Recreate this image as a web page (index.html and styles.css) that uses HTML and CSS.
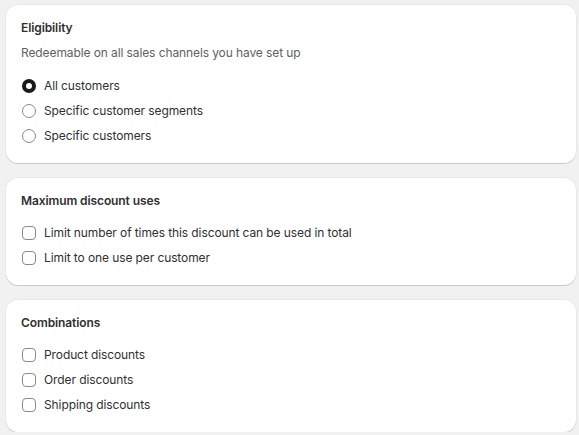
FILE: index.html
```html
<!DOCTYPE html>
<html lang="en">
<head>
  <meta charset="UTF-8" />
  <title>Discount settings</title>
  <link rel="stylesheet" href="styles.css">
</head>
<body>

  <div class="card">
    <h2 class="card-title">Eligibility</h2>
    <p class="card-note">Redeemable on all sales channels you have set up</p>
    <div class="choice-list">
      <label class="choice"><span class="radio checked"></span>All customers</label>
      <label class="choice"><span class="radio"></span>Specific customer segments</label>
      <label class="choice"><span class="radio"></span>Specific customers</label>
    </div>
  </div>

  <div class="card">
    <h2 class="card-title">Maximum discount uses</h2>
    <div class="choice-list">
      <label class="choice"><span class="checkbox"></span>Limit number of times this discount can be used in total</label>
      <label class="choice"><span class="checkbox"></span>Limit to one use per customer</label>
    </div>
  </div>

  <div class="card">
    <h2 class="card-title">Combinations</h2>
    <div class="choice-list">
      <label class="choice"><span class="checkbox"></span>Product discounts</label>
      <label class="choice"><span class="checkbox"></span>Order discounts</label>
      <label class="choice"><span class="checkbox"></span>Shipping discounts</label>
    </div>
  </div>

</body>
</html>
```

FILE: styles.css
```css
body {
  font-family: Inter, "Noto Sans", sans-serif;
  font-size: 12px;
  letter-spacing: -0.1px;
  background-color: #f1f1f1;
  color: #303030;
  margin: 0;
  padding: 5px 3px 0 6px;
  display: flex;
  flex-direction: column;
  gap: 15px;
}
.card {
  background-color: #fff;
  border-radius: 12px;
  padding: 15px 15px 15px 15px;
  box-shadow: 0 1px 0 rgba(0, 0, 0, 0.13), 0 0 0 1px rgba(0, 0, 0, 0.03);
}
.card-title {
  margin: 0 0 11px 0;
  font-size: 12px;
  line-height: 16px;
  font-weight: 600;
  color: #303030;
}
.card-note {
  margin: -4px 0 10px 0;
  line-height: 20px;
  color: #616161;
}
.choice-list {
  display: flex;
  flex-direction: column;
}
.choice {
  display: flex;
  align-items: center;
  gap: 8px;
  height: 25px;
  padding-left: 1px;
}
.radio, .checkbox {
  box-sizing: border-box;
  width: 14px;
  height: 14px;
  border: 1px solid #8a8a8a;
  flex-shrink: 0;
}
.radio {
  border-radius: 50%;
}
.radio.checked {
  border: 4px solid #1a1a1a;
}
.checkbox {
  border-radius: 4px;
}
```
